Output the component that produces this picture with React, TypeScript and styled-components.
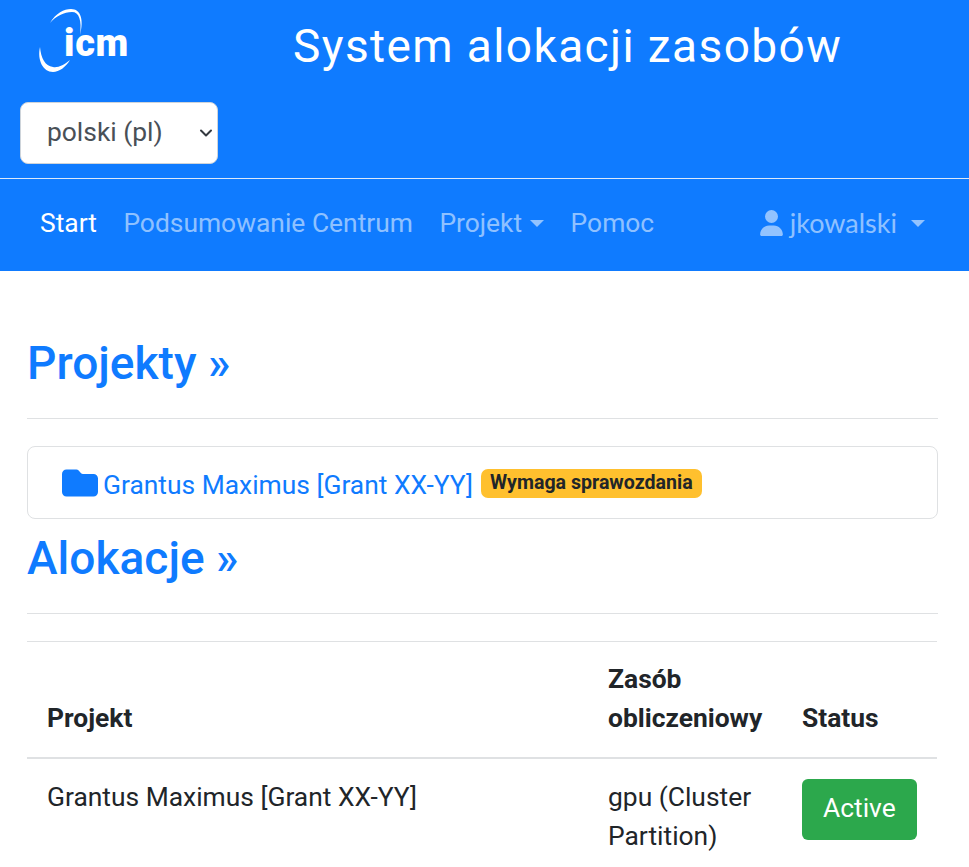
import React from 'react';
import styled, { createGlobalStyle } from 'styled-components';

const Global = createGlobalStyle`
  html, body { margin: 0; padding: 0; background: #fff; }
  body { font-family: Roboto, "Liberation Sans", sans-serif; font-size: 26.4px; line-height: 1.5; color: #212529; overflow: hidden; height: 867px; }
  * { box-sizing: border-box; }
`;
const Banner = styled.header`background: #0f7bff; height: 178px; padding: 0 20px; display: flex; flex-direction: column;`;
const BannerTop = styled.div`display: flex; height: 102px;`;
const Logo = styled.svg`width: 100px; height: 78px; margin-left: 16px; flex: none;`;
const LogoText = styled.text`font-family: Roboto, sans-serif; font-weight: 900; font-size: 38px; letter-spacing: 0.7px; fill: #fff;`;
const Title = styled.h1`margin: 18px 0 0 157px; font-size: 46px; font-weight: 400; line-height: 1.25; color: #fff; letter-spacing: 1.4px; white-space: nowrap;`;
const Lang = styled.div`width: 198px; height: 62px; background: #fff; border: 1px solid #ced4da; border-radius: 8px; padding: 0 3px 0 26px; display: flex; align-items: center; justify-content: space-between; color: #495057;`;
const Nav = styled.nav`background: #0f7bff; border-top: 1px solid #dbe9fb; height: 93px; padding: 0 44px 2px 20px; display: flex; align-items: center; justify-content: space-between;`;
const NavLinks = styled.div`display: flex; gap: 26.5px; align-items: center;`;
const NavLink = styled.span<{ $active?: boolean }>`color: ${p => p.$active ? '#fff' : 'rgba(255,255,255,.55)'}; display: inline-flex; align-items: center; white-space: nowrap; margin-left: ${p => p.$active ? '20px' : '0'};`;
const UserLink = styled(NavLink)`font-family: Lato, sans-serif; font-size: 27px; padding-bottom: 2px;`;
const Caret = styled.i<{ $gap?: number }>`display: inline-block; margin-left: ${p => p.$gap ?? 8}px; border-top: 7px solid currentColor; border-left: 7.5px solid transparent; border-right: 7.5px solid transparent;`;
const Main = styled.main`padding: 65px 31px 0 27px;`;
const Heading = styled.h2<{ $gap?: number }>`margin: ${p => p.$gap ?? 0}px 0 0; font-size: 46.1px; font-weight: 500; line-height: 1.2; color: #0f7bff;`;
const Rule = styled.hr<{ $top?: number }>`border: 0; border-top: 1px solid #dfe1e3; margin: ${p => p.$top ?? 26}px 0 27px;`;
const Card = styled.div`height: 73px; border: 1px solid #dfe1e3; border-radius: 8px; padding: 6px 0 0 34px; display: flex; align-items: center; color: #0f7bff;`;
const Folder = styled.svg`width: 36px; height: 28px; fill: #0f7bff; margin: -5px 5px 0 0;`;
const Badge = styled.span`background: #ffc02e; color: #212529; font-size: 19.6px; font-weight: 700; line-height: 1; border-radius: 7px; padding: 4px 9px 5px; margin: -5px 0 0 8px; white-space: nowrap;`;
const Table = styled.table`width: 910px; border-collapse: collapse; table-layout: fixed; border-top: 1px solid #dfe1e3;`;
const Th = styled.th<{ $w: number }>`width: ${p => p.$w}px; padding: 18px 20px 19px; text-align: left; vertical-align: bottom; font-weight: 700; line-height: 39px; border-bottom: 2px solid #dfe1e3;`;
const Td = styled.td`padding: 19px 20px; vertical-align: top; line-height: 39px;`;
const Status = styled.span`display: inline-block; background: #2ca84c; color: #fff; border-radius: 6px; height: 61px; margin-top: 1px; padding: 9px 21px; line-height: 41px;`;

export default function App() {
  return (
    <>
      <Global />
      <Banner>
        <BannerTop>
          <Logo viewBox="0 0 100 78" fill="none">
            <path d="M14 23 C20 13 28 9 35 9 C45 9 48 20 44 35 C46 20 43 12 36 12 C28 12 20 16 14 23 Z" fill="#fff" />
            <path d="M4 47 C1 60 7 72 17 72 C23 72 30 67 34 60 C28 65 22 68 17 67 C9 66 5 58 4 47 Z" fill="#fff" />
            <LogoText x="28" y="56">icm</LogoText>
          </Logo>
          <Title>System alokacji zasobów</Title>
        </BannerTop>
        <Lang>
          polski (pl)
          <svg width="16" height="16" viewBox="0 0 16 16" fill="none"><path d="M3 5.5l5 5 5-5" stroke="#343a40" strokeWidth="2" strokeLinecap="round" strokeLinejoin="round" /></svg>
        </Lang>
      </Banner>
      <Nav>
        <NavLinks>
          <NavLink $active>Start</NavLink>
          <NavLink>Podsumowanie Centrum</NavLink>
          <NavLink>Projekt<Caret /></NavLink>
          <NavLink>Pomoc</NavLink>
        </NavLinks>
        <UserLink>
          <svg width="23" height="26" viewBox="0 0 448 512" fill="currentColor" style={{ marginRight: 7 }}><path d="M224 256a128 128 0 1 0 0-256 128 128 0 1 0 0 256zm-45.7 48C79.8 304 0 383.8 0 482.3 0 498.7 13.3 512 29.7 512h388.6c16.4 0 29.7-13.3 29.7-29.7C448 383.8 368.2 304 269.7 304h-91.4z" /></svg>
          jkowalski<Caret $gap={14} />
        </UserLink>
      </Nav>
      <Main>
        <Heading>Projekty »</Heading>
        <Rule $top={27} />
        <Card>
          <Folder viewBox="0 0 512 384"><path d="M64 0C29 0 0 29 0 64v256c0 35 29 64 64 64h384c35 0 64-29 64-64V128c0-35-29-64-64-64H298c-10 0-20-4-27-11L237 13C229 5 217 0 205 0H64z" /></Folder>
          Grantus Maximus [Grant XX-YY]
          <Badge>Wymaga sprawozdania</Badge>
        </Card>
        <Heading $gap={12}>Alokacje »</Heading>
        <Rule />
        <Table>
          <thead>
            <tr>
              <Th $w={561}>Projekt</Th>
              <Th $w={194}>Zasób obliczeniowy</Th>
              <Th $w={155}>Status</Th>
            </tr>
          </thead>
          <tbody>
            <tr>
              <Td>Grantus Maximus [Grant XX-YY]</Td>
              <Td>gpu (Cluster Partition)</Td>
              <Td><Status>Active</Status></Td>
            </tr>
          </tbody>
        </Table>
      </Main>
    </>
  );
}
